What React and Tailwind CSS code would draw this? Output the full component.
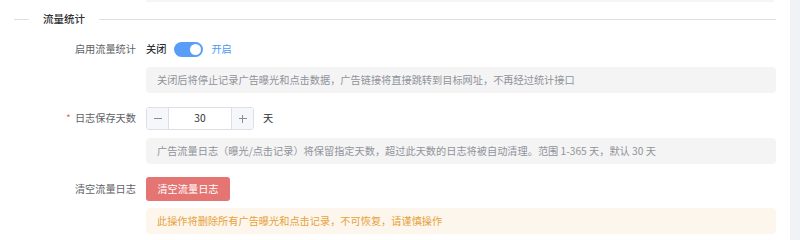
import React from "react";

function Label({ children, required }) {
  return (
    <div className="w-[132px] shrink-0 pr-[10px] flex items-center justify-end text-[#606266]">
      {required && <span className="text-[#f56c6c] mr-[4px]">*</span>}
      <span>{children}</span>
    </div>
  );
}

function Tip({ children, warn }) {
  return (
    <div className="flex">
      <div className="w-[132px] shrink-0" />
      <div
        className={
          "flex-1 h-[26px] rounded-[4px] px-[11px] flex items-center " +
          (warn ? "bg-[#fdf6ec] text-[#e6a23c]" : "bg-[#f4f4f5] text-[#909399]")
        }
      >
        {children}
      </div>
    </div>
  );
}

export default function App() {
  return (
    <div
      className="w-[800px] h-[240px] flex bg-white overflow-hidden text-[10.2px] leading-none"
      style={{ fontFamily: '"Noto Sans CJK SC", "Noto Sans", sans-serif' }}
    >
      <div className="w-[790px] px-[14px] flex flex-col">
        <div className="flex">
          <div className="w-[132px] shrink-0" />
          <div className="flex-1 h-[2px] bg-[#f5f5f6] mr-[2px]" />
        </div>
        <div className="mt-[10px] h-[14px] flex items-center">
          <div className="w-[15px] h-px bg-[#dcdfe6]" />
          <div className="px-[14px] text-[10.5px] font-medium text-[#303133]">流量统计</div>
          <div className="flex-1 h-px bg-[#dcdfe6]" />
        </div>

        <div className="mt-[12px] h-[23px] flex">
          <Label>启用流量统计</Label>
          <div className="flex items-center">
            <span className="text-[#303133] font-medium">关闭</span>
            <div className="ml-[8px] w-[29px] h-[15px] rounded-full bg-[#589ef9] flex items-center justify-end pr-[2px]">
              <div className="w-[11px] h-[11px] rounded-full bg-white" />
            </div>
            <span className="ml-[8px] text-[#4a98f7]">开启</span>
          </div>
        </div>
        <div className="mt-[6px]">
          <Tip>关闭后将停止记录广告曝光和点击数据，广告链接将直接跳转到目标网址，不再经过统计接口</Tip>
        </div>

        <div className="mt-[14px] h-[23px] flex">
          <Label required>日志保存天数</Label>
          <div className="flex items-center">
            <div className="w-[108px] h-[23px] border border-[#dcdfe6] rounded-[3px] flex overflow-hidden">
              <div className="w-[22px] bg-[#f5f7fa] border-r border-[#dcdfe6] flex items-center justify-center text-[#8a8d93]">
                <div className="w-[8px] h-px bg-[#8a8d93]" />
              </div>
              <div className="flex-1 flex items-center justify-center text-[#303133]">30</div>
              <div className="w-[22px] bg-[#f5f7fa] border-l border-[#dcdfe6] flex items-center justify-center relative">
                <div className="w-[8px] h-px bg-[#8a8d93]" />
                <div className="absolute w-px h-[8px] bg-[#8a8d93]" />
              </div>
            </div>
            <span className="ml-[9px] text-[#303133]">天</span>
          </div>
        </div>
        <div className="mt-[8px]">
          <Tip>广告流量日志（曝光/点击记录）将保留指定天数，超过此天数的日志将被自动清理。范围 1-365 天，默认 30 天</Tip>
        </div>

        <div className="mt-[13px] h-[24px] flex">
          <Label>清空流量日志</Label>
          <div className="w-[84px] h-[24px] rounded-[3px] bg-[#e47572] text-white flex items-center justify-center">
            清空流量日志
          </div>
        </div>
        <div className="mt-[7px]">
          <Tip warn>此操作将删除所有广告曝光和点击记录，不可恢复，请谨慎操作</Tip>
        </div>
      </div>
      <div className="flex-1 bg-[#f0f2f5]" />
    </div>
  );
}
